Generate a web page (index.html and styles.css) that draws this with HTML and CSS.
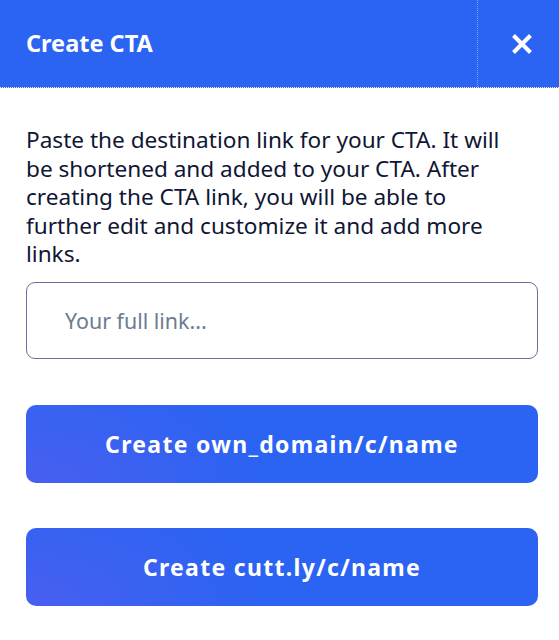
FILE: index.html
```html
<!DOCTYPE html>
<html lang="en">
<head>
<meta charset="utf-8">
<title>Create CTA</title>
<link rel="stylesheet" href="styles.css">
</head>
<body>
<div class="modal">
  <header class="modal-header">
    <h1 class="modal-title">Create CTA</h1>
    <button class="close-btn" aria-label="Close">
      <svg width="22" height="22" viewBox="0 0 22 22"><path d="M2.5 2.5 L19.5 19.5 M19.5 2.5 L2.5 19.5" stroke="#fff" stroke-width="4" stroke-linecap="butt" fill="none"/></svg>
    </button>
  </header>
  <div class="modal-body">
    <p class="intro">Paste the destination link for your CTA. It will be shortened and added to your CTA. After creating the CTA link, you will be able to further edit and customize it and add more links.</p>
    <input class="link-input" type="text" placeholder="Your full link...">
    <div class="actions">
      <button class="cta-btn">Create own_domain/c/name</button>
      <button class="cta-btn">Create cutt.ly/c/name</button>
    </div>
  </div>
</div>
</body>
</html>
```

FILE: styles.css
```css
html, body {
  margin: 0;
  padding: 0;
  background: #ffffff;
}
body {
  font-family: "Noto Sans", "Open Sans", sans-serif;
  color: #101634;
}
.modal {
  width: 559px;
}
.modal-header {
  display: flex;
  height: 88px;
  background: #2b63f2;
  border-bottom: 1px dotted #f2f0dc;
  box-sizing: border-box;
}
.modal-title {
  flex: 1;
  margin: 0;
  padding-left: 26px;
  display: flex;
  align-items: center;
  font-size: 23.5px;
  font-weight: 700;
  color: #ffffff;
  padding-bottom: 2px;
}
.close-btn {
  width: 82px;
  border: 0;
  border-left: 1px dotted #7ea4f8;
  background: transparent;
  display: flex;
  align-items: center;
  justify-content: center;
  padding: 0 0 0 6px;
  cursor: pointer;
}
.modal-body {
  padding: 38px 21px 0 26px;
}
.intro {
  margin: 0 0 13px;
  max-width: 500px;
  font-size: 22.6px;
  line-height: 28.5px;
  letter-spacing: 0;
}
.link-input {
  display: block;
  width: 100%;
  box-sizing: border-box;
  height: 77px;
  border: 1px solid #716d9b;
  border-radius: 9px;
  padding: 0 0 0 38px;
  font-family: inherit;
  font-size: 21.4px;
  color: #101634;
  outline: none;
}
.link-input::placeholder {
  color: #6e7b8f;
}
.actions {
  display: flex;
  flex-direction: column;
  gap: 45px;
  margin-top: 46px;
}
.cta-btn {
  height: 78px;
  border: 0;
  border-radius: 10px;
  background:
    radial-gradient(ellipse 240px 130px at 0% 100%, rgba(190, 80, 235, 0.2), rgba(190, 80, 235, 0) 100%),
    #2b63f2;
  color: #ffffff;
  font-family: inherit;
  font-size: 23px;
  font-weight: 700;
  letter-spacing: 1.3px;
  cursor: pointer;
}
```
